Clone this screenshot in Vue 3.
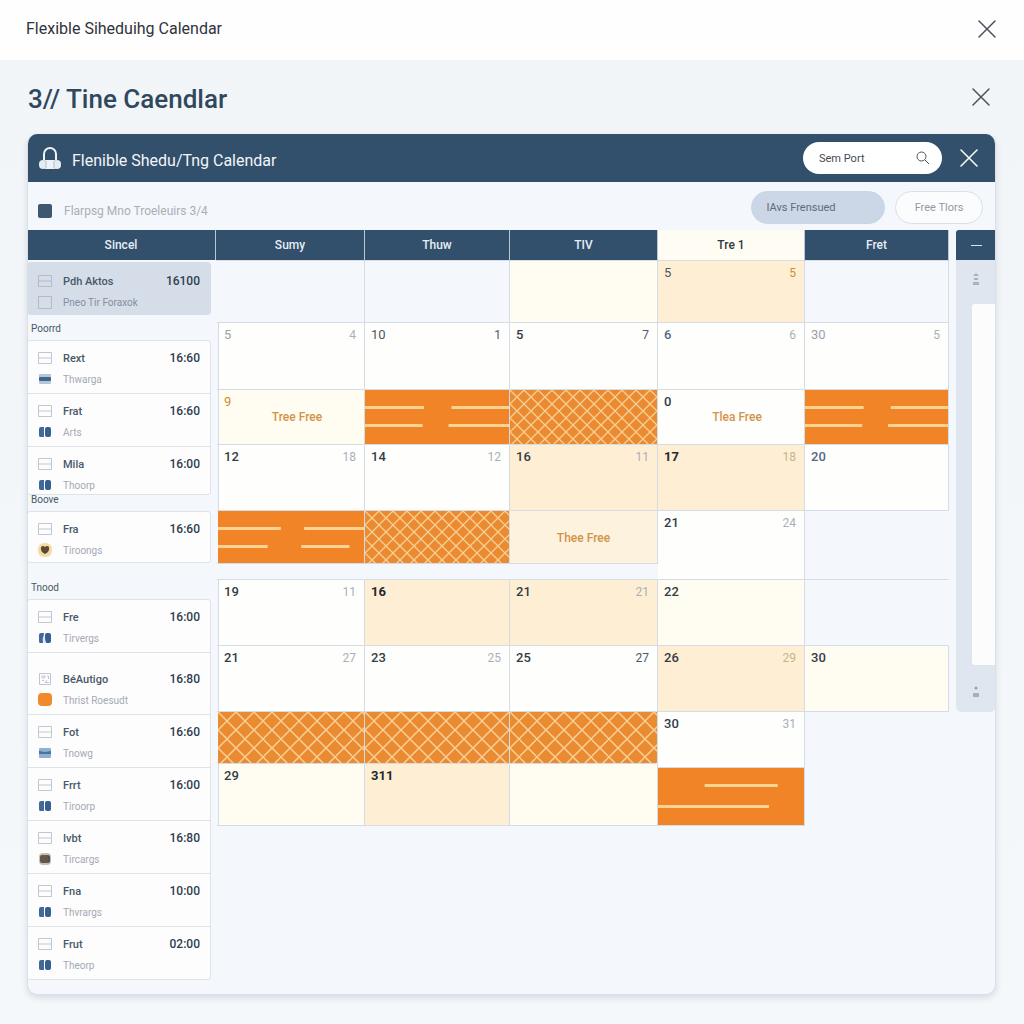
<script setup>
import { ref } from 'vue'

const search = ref('Sem Port')
const allShown = ref(true)

const selected = { title: 'Pdh Aktos', sub: 'Pneo Tir Foraxok', time: '16100' }

const groups = [
  {
    label: 'Poorrd',
    tone: 'first',
    items: [
      { title: 'Rext', sub: 'Thwarga', time: '16:60', icon: 'flat' },
      { title: 'Frat', sub: 'Arts', time: '16:60', icon: 'twin' },
      { title: 'Mila', sub: 'Thoorp', time: '16:00', icon: 'twin', size: 'short' }
    ]
  },
  {
    label: 'Boove',
    tone: 'second',
    items: [{ title: 'Fra', sub: 'Tiroongs', time: '16:60', icon: 'face' }]
  },
  {
    label: 'Tnood',
    tone: 'third',
    items: [
      { title: 'Fre', sub: 'Tirvergs', time: '16:00', icon: 'split' },
      { title: 'BéAutigo', sub: 'Thrist Roesudt', time: '16:80', icon: 'orange', size: 'tall' },
      { title: 'Fot', sub: 'Tnowg', time: '16:60', icon: 'band' },
      { title: 'Frrt', sub: 'Tiroorp', time: '16:00', icon: 'twin' },
      { title: 'Ivbt', sub: 'Tircargs', time: '16:80', icon: 'brown' },
      { title: 'Fna', sub: 'Thvrargs', time: '10:00', icon: 'twin' },
      { title: 'Frut', sub: 'Theorp', time: '02:00', icon: 'twin' }
    ]
  }
]

const columns = [
  { name: 'Sumy', width: 149 },
  { name: 'Thuw', width: 145 },
  { name: 'TIV', width: 148 },
  { name: 'Tre 1', width: 147, current: true },
  { name: 'Fret', width: 144 }
]

const wideBars = [
  { x: 0, w: 41, y: 16 },
  { x: 60, w: 40, y: 16 },
  { x: 0, w: 40, y: 34 },
  { x: 58, w: 42, y: 34 }
]
const looseBars = [
  { x: 0, w: 43, y: 16 },
  { x: 59, w: 41, y: 16 },
  { x: 0, w: 34, y: 34 },
  { x: 57, w: 33, y: 34 }
]
const endBars = [
  { x: 32, w: 50, y: 16 },
  { x: 0, w: 76, y: 37 }
]

const rows = [
  {
    height: 62,
    cells: [
      { kind: 'empty' },
      { kind: 'empty' },
      { kind: 'cream' },
      { kind: 'peach', day: '5', tone: 'slate', alt: '5', altTone: 'amber' },
      { kind: 'empty' }
    ]
  },
  {
    height: 67,
    cells: [
      { kind: 'white', day: '5', tone: 'muted', alt: '4' },
      { kind: 'white', day: '10', tone: 'slate', alt: '1', altTone: 'slate' },
      { kind: 'white', day: '5', alt: '7', altTone: 'slate' },
      { kind: 'white', day: '6', tone: 'steel', alt: '6' },
      { kind: 'white', day: '30', tone: 'muted', alt: '5' }
    ]
  },
  {
    height: 55,
    cells: [
      { kind: 'cream', day: '9', tone: 'amber', note: 'Tree Free' },
      { kind: 'solid', bars: wideBars },
      { kind: 'lattice', pattern: 'small' },
      { kind: 'white', day: '0', note: 'Tlea Free' },
      { kind: 'solid', bars: wideBars }
    ]
  },
  {
    height: 66,
    cells: [
      { kind: 'white', day: '12', alt: '18' },
      { kind: 'white', day: '14', alt: '12' },
      { kind: 'peach', day: '16', alt: '11' },
      { kind: 'peach', day: '17', tone: 'strong', alt: '18', altTone: 'sand' },
      { kind: 'white', day: '20', tone: 'steel' }
    ]
  },
  {
    height: 53,
    cells: [
      { kind: 'solid', bars: looseBars },
      { kind: 'lattice', pattern: 'small' },
      { kind: 'pale', note: 'Thee Free' },
      { kind: 'white', day: '21', alt: '24', span: 2 },
      { kind: 'open', span: 2 }
    ]
  },
  { height: 16, cells: [{ kind: 'gap' }, { kind: 'gap' }, { kind: 'gap' }] },
  {
    height: 66,
    cells: [
      { kind: 'white', day: '19', alt: '11' },
      { kind: 'peach', day: '16', tone: 'strong' },
      { kind: 'peach', day: '21', alt: '21' },
      { kind: 'cream', day: '22' },
      { kind: 'open' }
    ]
  },
  {
    height: 66,
    cells: [
      { kind: 'white', day: '21', alt: '27' },
      { kind: 'white', day: '23', alt: '25' },
      { kind: 'white', day: '25', alt: '27', altTone: 'slate' },
      { kind: 'peach', day: '26', alt: '29', altTone: 'sand' },
      { kind: 'cream', day: '30' }
    ]
  },
  {
    height: 52,
    cells: [
      { kind: 'lattice', pattern: 'large' },
      { kind: 'lattice', pattern: 'large' },
      { kind: 'lattice', pattern: 'large' },
      { kind: 'white', day: '30', alt: '31', span: 2 },
      { kind: 'none', span: 3 }
    ]
  },
  {
    height: 4,
    cells: [
      { kind: 'cream', day: '29', span: 2 },
      { kind: 'peach', day: '311', tone: 'strong', span: 2 },
      { kind: 'cream', span: 2 }
    ]
  },
  { height: 58, cells: [{ kind: 'solid', bars: endBars }] }
]
</script>

<template>
  <div class="page">
    <svg class="defs" width="0" height="0" aria-hidden="true">
      <defs>
        <pattern id="lattice-small" width="14" height="14" patternUnits="userSpaceOnUse">
          <path d="M-1 -1L15 15M15 -1L-1 15" stroke="#f9cf95" stroke-width="1.3" />
        </pattern>
        <pattern id="lattice-large" width="18" height="18" patternUnits="userSpaceOnUse">
          <path d="M-1 -1L19 19M19 -1L-1 19" stroke="#f9cf95" stroke-width="1.5" />
        </pattern>
      </defs>
    </svg>

    <header class="topbar">
      <h1>Flexible Siheduihg Calendar</h1>
      <button type="button" class="close" aria-label="Close window">
        <svg width="18" height="18" viewBox="0 0 18 18"><path d="M1 1L17 17M17 1L1 17" /></svg>
      </button>
    </header>

    <main>
      <div class="heading">
        <h2>3// Tine Caendlar</h2>
        <button type="button" class="close" aria-label="Close calendar">
          <svg width="18" height="18" viewBox="0 0 18 18"><path d="M1 1L17 17M17 1L1 17" /></svg>
        </button>
      </div>

      <section class="card">
        <div class="card-head">
          <svg class="logo" width="22" height="24" viewBox="0 0 22 24">
            <path d="M5 14V8a6 6 0 0 1 12 0V14" fill="none" stroke="#eef3f8" stroke-width="2" />
            <rect x="5" y="14" width="12" height="9" rx="2" fill="#eef3f8" />
            <rect x="0" y="14" width="8" height="9" rx="4" fill="#e3ebf3" />
            <rect x="14" y="14" width="8" height="9" rx="4" fill="#e3ebf3" />
            <path d="M7 15V22M15 15V22" stroke="#b4c2d1" stroke-width="1" />
          </svg>
          <h3>Flenible Shedu/Tng Calendar</h3>
          <div class="search">
            <input v-model="search" type="text" aria-label="Search" />
            <svg width="14" height="14" viewBox="0 0 14 14">
              <circle cx="5.500" cy="5.500" r="4.500" /><path d="M9 9L13 13" />
            </svg>
          </div>
          <button type="button" class="close light" aria-label="Close panel">
            <svg width="18" height="18" viewBox="0 0 18 18"><path d="M1 1L17 17M17 1L1 17" /></svg>
          </button>
        </div>

        <div class="toolbar">
          <label><input v-model="allShown" type="checkbox" />Flarpsg Mno Troeleuirs 3/4</label>
          <button type="button" class="pill active">IAvs Frensued</button>
          <button type="button" class="pill">Free Tlors</button>
        </div>

        <div class="body">
          <aside>
            <div class="side-head">Sincel</div>
            <div class="entry selected">
              <svg class="kind" width="14" height="12" viewBox="0 0 14 12"><path d="M.5.5H13.500V11.500H.5ZM.5 6H13.500" /></svg>
              <strong>{{ selected.title }}</strong>
              <time>{{ selected.time }}</time>
              <svg class="kind" width="14" height="13" viewBox="0 0 14 13"><rect x=".5" y=".5" width="13" height="12" /></svg>
              <span>{{ selected.sub }}</span>
            </div>

            <template v-for="group in groups" :key="group.label">
              <h4 :class="group.tone">{{ group.label }}</h4>
              <ul>
                <li v-for="item in group.items" :key="item.title" class="entry" :class="item.size">
                  <svg class="kind" width="14" height="12" viewBox="0 0 14 12">
                    <path v-if="item.icon !== 'orange'" d="M.5.5H13.500V11.500H.5ZM.5 6H13.500" />
                    <path v-else d="M1.500.5H12.500V11.500H1.500ZM4 3H7V5H4ZM9 3H10.500V6M4 7.500H6M9 7L7 9.500H11" />
                  </svg>
                  <strong>{{ item.title }}</strong>
                  <time>{{ item.time }}</time>
                  <svg class="mark" width="16" height="14" viewBox="0 0 16 14">
                    <template v-if="item.icon === 'flat'">
                      <rect x="2" y="2" width="12" height="10" rx="1" fill="#b4c6da" />
                      <rect x="2" y="5" width="12" height="4" rx="1" fill="#44658b" />
                    </template>
                    <template v-else-if="item.icon === 'band'">
                      <rect x="2" y="2" width="12" height="10" rx="1" fill="#8fb0d2" />
                      <path d="M2 5L8 6L14 5V8H2Z" fill="#4874a3" />
                    </template>
                    <template v-else-if="item.icon === 'face'">
                      <rect x="1" y="0" width="14" height="14" rx="6" fill="#f4dda2" />
                      <path d="M4 4Q6 2 8 4Q10 2 12 4Q13 9 8 11Q3 9 4 4Z" fill="#5c4a36" />
                    </template>
                    <rect v-else-if="item.icon === 'orange'" x="1" y="0" width="14" height="13" rx="4" fill="#f18a2c" />
                    <template v-else-if="item.icon === 'brown'">
                      <rect x="2" y="1" width="12" height="12" rx="4" fill="#c9beb3" />
                      <rect x="3" y="3" width="10" height="8" rx="2" fill="#65574c" />
                      <path d="M12 4V10" stroke="#364c6b" />
                    </template>
                    <template v-else>
                      <path d="M4 2H7V12H3Q2 12 2 10V4Q2 2 4 2Z" fill="#416a98" />
                      <rect x="8" y="2" width="6" height="10" rx="2" fill="#365f92" />
                      <path v-if="item.icon === 'split'" d="M6 12Q5 8 7 3L9 12Z" fill="#dce8f5" />
                    </template>
                  </svg>
                  <span>{{ item.sub }}</span>
                </li>
              </ul>
            </template>
          </aside>

          <div class="calendar">
            <table>
              <colgroup>
                <col v-for="c in columns" :key="c.name" :style="{ width: c.width + 'px' }" />
              </colgroup>
              <thead>
                <tr>
                  <th v-for="c in columns" :key="c.name" scope="col" :class="{ current: c.current }">{{ c.name }}</th>
                </tr>
              </thead>
              <tbody>
                <tr v-for="(row, r) in rows" :key="r" :style="{ height: row.height + 'px' }">
                  <td v-for="(cell, i) in row.cells" :key="i" :class="cell.kind" :rowspan="cell.span || 1">
                    <svg v-if="cell.bars" class="bars" width="100%" :height="row.height - 1">
                      <rect v-for="(b, n) in cell.bars" :key="n" :x="b.x + '%'" :y="b.y" :width="b.w + '%'" height="3" />
                    </svg>
                    <svg v-if="cell.pattern" class="bars" width="100%" :height="row.height - 1">
                      <rect width="100%" height="100%" :fill="`url(#lattice-${cell.pattern})`" />
                    </svg>
                    <div v-if="cell.day || cell.note" class="days">
                      <b :class="cell.tone">{{ cell.day }}</b>
                      <i :class="cell.altTone">{{ cell.alt }}</i>
                    </div>
                    <p v-if="cell.note" :class="{ dated: cell.day }">{{ cell.note }}</p>
                  </td>
                </tr>
              </tbody>
            </table>
          </div>

          <div class="rail">
            <button type="button" aria-label="Collapse"><svg width="11" height="2"><rect width="11" height="1" y="1" fill="#d8e2ec" /></svg></button>
            <div class="track">
              <svg width="8" height="14" viewBox="0 0 8 14">
                <path d="M4 1L7 4H1ZM2 6H6V8H2ZM1 10H7V13H1Z" fill="#a9b1bd" />
              </svg>
              <div class="thumb"></div>
              <svg width="8" height="12" viewBox="0 0 8 12">
                <circle cx="4" cy="2" r="1.500" fill="#959eac" /><rect x="1" y="7" width="6" height="4" fill="#a5aebb" />
              </svg>
            </div>
          </div>
        </div>
      </section>
    </main>
  </div>
</template>

<style>
body {
  margin: 0;
  background: #f3f7fa;
}
</style>

<style scoped>
* {
  box-sizing: border-box;
}
.page {
  min-height: 100vh;
  font-family: Roboto, "Liberation Sans", sans-serif;
  color: #2e3f50;
  background: linear-gradient(#f2f5f8, #f4f8fb);
}
.defs {
  position: absolute;
}
h1, h2, h3, h4, p, ul {
  margin: 0;
  padding: 0;
  font-weight: 400;
}
button {
  font: inherit;
  border: 0;
  padding: 0;
  cursor: pointer;
}
.close {
  display: flex;
  background: none;
}
.close path {
  stroke: #4b505b;
  stroke-width: 1.5;
  stroke-linecap: round;
}
.close.light path {
  stroke: #fff;
}
.topbar {
  display: flex;
  align-items: center;
  justify-content: space-between;
  height: 60px;
  padding: 0 28px 3px 26px;
  background: #fefefe;
}
h1 {
  font-size: 16px;
  color: #30343b;
}
main {
  padding: 0 28px 28px 27px;
}
.heading {
  display: flex;
  align-items: center;
  justify-content: space-between;
  height: 74px;
  padding: 0 6px 0 1px;
}
h2 {
  padding-top: 4px;
  font-size: 26px;
  font-weight: 500;
  color: #30485d;
}
.card {
  padding-bottom: 14px;
  border: 1px solid #d9e0e8;
  border-top: 0;
  border-radius: 10px;
  overflow: hidden;
  background: #f4f7fb;
  box-shadow: 0 3px 6px rgba(50, 70, 90, 0.15);
}
.card-head {
  display: flex;
  align-items: center;
  height: 48px;
  margin: 0 -1px;
  padding: 0 18px 0 12px;
  background: #324f6b;
}
h3 {
  flex: 1;
  padding: 4px 0 0 11px;
  font-size: 16px;
  color: #f2f6fa;
}
.search {
  display: flex;
  align-items: center;
  width: 139px;
  height: 32px;
  margin-right: 18px;
  padding: 0 12px 0 16px;
  border-radius: 16px;
  background: #fff;
}
.search input {
  flex: 1;
  min-width: 0;
  padding: 0;
  border: 0;
  outline: 0;
  background: none;
  font: 11px Roboto, "Liberation Sans", sans-serif;
  color: #454b55;
}
.search svg {
  fill: none;
  stroke: #4c525c;
}
.toolbar {
  display: flex;
  align-items: center;
  gap: 10px;
  height: 48px;
  padding: 2px 12px 0 10px;
  font-size: 11px;
}
.toolbar label {
  display: flex;
  flex: 1;
  align-items: center;
  gap: 12px;
  padding-top: 8px;
  font-size: 12px;
  color: #a9b0b9;
}
.toolbar input {
  appearance: none;
  width: 14px;
  height: 14px;
  margin: 0;
  border-radius: 2px;
  background: #3e5871;
}
.pill {
  width: 88px;
  height: 33px;
  border: 1px solid #dbe0e7;
  border-radius: 17px;
  background: #fbfcfd;
  color: #949aa4;
}
.pill.active {
  width: 134px;
  padding-right: 34px;
  border-color: #c9d4e5;
  background: #cbd6e7;
  color: #5f6a7b;
}
.body {
  display: flex;
  align-items: flex-start;
  margin: 0 -1px;
}
aside {
  width: 189px;
  flex: none;
}
.side-head {
  height: 30px;
  margin-bottom: 2px;
  border-right: 1px solid #b7c7d8;
  background: #324f6b;
  color: #e6eef6;
  font-size: 12px;
  font-weight: 500;
  line-height: 30px;
  text-align: center;
}
.entry {
  display: grid;
  grid-template-columns: 16px 1fr auto;
  grid-template-rows: 20px 22px;
  align-items: center;
  column-gap: 10px;
  height: 53px;
  padding: 7px 10px 0 9px;
  border-top: 1px solid #dfe3e8;
  list-style: none;
}
.entry:first-child {
  height: 52px;
  border-top: 0;
}
.entry:only-child {
  height: 50px;
}
.entry.short {
  height: 48px;
}
.entry.tall {
  height: 62px;
  padding-top: 16px;
}
.entry.selected {
  width: 184px;
  height: 53px;
  padding: 9px 11px 0 10px;
  border: 0;
  border-radius: 4px;
  background: #d5dde9;
}
.kind {
  justify-self: center;
  fill: none;
  stroke: #c2c7cf;
}
.selected .kind {
  stroke: #b3bbc9;
}
.mark {
  justify-self: center;
}
.entry strong {
  font-size: 11px;
  font-weight: 500;
  color: #4a5868;
}
.entry time {
  font-size: 12px;
  font-weight: 500;
  color: #2f3e4e;
}
.entry span {
  grid-column: 2 / 4;
  font-size: 10px;
  color: #a4a9b3;
}
.entry.selected span {
  color: #868f9e;
}
ul {
  width: 184px;
  border: 1px solid #dfe3e8;
  border-radius: 3px;
  background: #fdfdfe;
}
h4 {
  padding-left: 4px;
  font-size: 10px;
  color: #4a5867;
}
h4.first {
  height: 25px;
  line-height: 28px;
}
h4.second {
  height: 16px;
  line-height: 10px;
}
h4.third {
  height: 36px;
  padding-top: 14px;
  line-height: 22px;
}
.calendar {
  flex: 1;
  min-width: 0;
}
table {
  width: 100%;
  table-layout: fixed;
  border-collapse: separate;
  border-spacing: 0;
}
th {
  height: 31px;
  padding: 0;
  border-right: 1px solid #b7c7d8;
  border-bottom: 1px solid #d7dee7;
  background: #324f6b;
  color: #e6eef6;
  font-size: 12px;
  font-weight: 500;
}
th.current {
  background: #fffdf3;
  color: #33383f;
}
td {
  padding: 0;
  border-right: 1px solid #d5dce5;
  border-bottom: 1px solid #d5dce5;
  vertical-align: top;
}
td:first-child:not(:only-child) {
  border-left: 2px solid #f4f7fb;
}
td.white:first-child,
td.cream:first-child {
  box-shadow: inset 1px 0 #d5dce5;
}
.white {
  background: #fefefd;
}
.cream {
  background: #fffcf2;
}
.peach {
  background: #feefd4;
}
.pale {
  background: #fdf2de;
}
.solid {
  background: #f28428;
}
.lattice {
  background: #ea8a31;
}
.open {
  border-right-color: transparent;
}
.none {
  border-color: transparent;
}
.gap {
  border-right-color: transparent;
}
.bars {
  display: block;
  fill: #fdd394;
}
.days {
  display: flex;
  justify-content: space-between;
  height: 19px;
  padding: 5px 8px 0 6px;
  font-size: 13px;
  line-height: 14px;
}
.days b {
  font-weight: 500;
  color: #343c46;
}
.days i {
  font-style: normal;
  font-size: 12px;
  color: #aab0ba;
}
.days .muted {
  font-weight: 400;
  color: #9ba1ac;
}
.days .slate {
  font-weight: 400;
  color: #4c586a;
}
.days .steel {
  color: #566882;
}
.days .strong {
  font-weight: 700;
  color: #24292f;
}
.days .amber {
  font-weight: 400;
  color: #cf8b3a;
}
.days .sand {
  color: #c9b28d;
}
td p {
  color: #d2934a;
  font-size: 12px;
  font-weight: 500;
  line-height: 17px;
  text-align: center;
}
td p.dated {
  padding-left: 12px;
}
.rail {
  flex: none;
  width: 40px;
  margin-left: 7px;
}
.rail button {
  display: flex;
  align-items: center;
  justify-content: center;
  width: 100%;
  height: 30px;
  border-radius: 3px 0 0 0;
  background: #324f6b;
}
.track {
  display: flex;
  flex-direction: column;
  align-items: center;
  height: 452px;
  padding: 12px 0;
  border-radius: 0 0 6px 6px;
  background: #dfe6f0;
}
.thumb {
  align-self: flex-end;
  width: 24px;
  height: 361px;
  margin: 18px 0 21px;
  border-radius: 3px 0 0 3px;
  background: #fcfcfd;
}
</style>
